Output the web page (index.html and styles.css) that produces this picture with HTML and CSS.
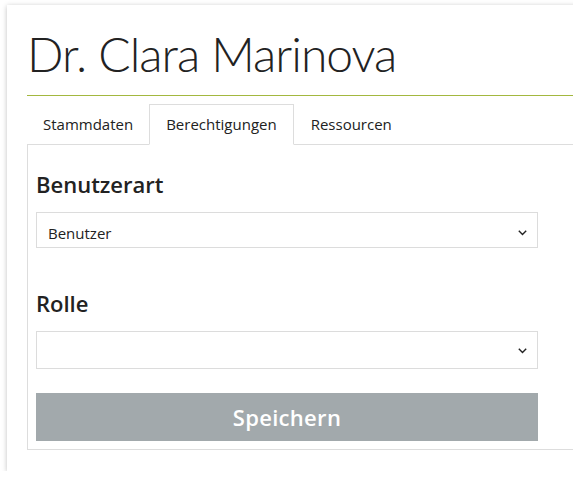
FILE: index.html
```html
<!DOCTYPE html>
<html lang="de">
<head>
<meta charset="utf-8">
<title>Dr. Clara Marinova</title>
<link rel="stylesheet" href="styles.css">
</head>
<body>
<div class="card">
  <h1 class="title">Dr. Clara Marinova</h1>
  <ul class="tabs">
    <li class="tab tab-first">Stammdaten</li>
    <li class="tab active">Berechtigungen</li>
    <li class="tab">Ressourcen</li>
  </ul>
  <div class="panel">
    <h2 class="label label-first">Benutzerart</h2>
    <div class="select select-a">
      <span class="select-value">Benutzer</span>
      <svg class="chev" width="9" height="6" viewBox="0 0 9 6"><path d="M0.8 0.8 L4.5 4.5 L8.2 0.8" fill="none" stroke="#222" stroke-width="1.4"/></svg>
    </div>
    <h2 class="label label-second">Rolle</h2>
    <div class="select select-b">
      <span class="select-value"></span>
      <svg class="chev" width="9" height="6" viewBox="0 0 9 6"><path d="M0.8 0.8 L4.5 4.5 L8.2 0.8" fill="none" stroke="#222" stroke-width="1.4"/></svg>
    </div>
    <button class="save" type="button">Speichern</button>
  </div>
</div>
</body>
</html>
```
FILE: styles.css
```css
html, body {
  margin: 0;
  padding: 0;
  background: #fff;
  overflow: hidden;
}
body {
  font-family: "Open Sans", "Noto Sans", "Liberation Sans", sans-serif;
  color: #222;
}
.card {
  margin: 5px 0 0 7px;
  width: 640px;
  padding: 19px 0 21px 20px;
  background: #fff;
  box-shadow: 0 1px 5px rgba(0, 0, 0, 0.25);
}
.title {
  margin: 0;
  padding: 0 0 11px 0;
  font-family: "Lato", "Open Sans", sans-serif;
  font-size: 48px;
  font-weight: 300;
  letter-spacing: -1px;
  line-height: 60px;
  color: #222;
  border-bottom: 1px solid #a3b83f;
}
.tabs {
  list-style: none;
  margin: 8px 0 0 0;
  padding: 0;
  display: flex;
  border-bottom: 1px solid #ddd;
}
.tab {
  box-sizing: border-box;
  height: 40px;
  padding: 0 16px;
  border: 1px solid transparent;
  font-size: 15px;
  line-height: 38px;
  color: #222;
}
.tab-first {
  padding: 0 15px;
}
.tab.active {
  height: 41px;
  margin-bottom: -1px;
  border-color: #ddd;
  border-bottom-color: #fff;
  background: #fff;
}
.panel {
  border: 1px solid #ddd;
  border-top: none;
  padding: 24px 8px 8px 8px;
}
.label {
  margin: 0;
  font-size: 22px;
  font-weight: 600;
  line-height: 30px;
  color: #222;
}
.label-second {
  margin-top: 40px;
}
.select {
  box-sizing: border-box;
  width: 502px;
  border: 1px solid #dcdcdc;
  background: #fff;
  display: flex;
  align-items: center;
  justify-content: space-between;
  padding: 0 10px 0 11px;
}
.select-a {
  height: 36px;
  margin-top: 13px;
  padding-top: 5px;
}
.select-b {
  height: 38px;
  margin-top: 13px;
  padding-top: 2px;
}
.select-value {
  font-size: 15px;
  color: #222;
}
.chev {
  display: block;
}
.save {
  display: block;
  box-sizing: border-box;
  width: 502px;
  height: 48px;
  margin-top: 24px;
  border: none;
  background: #a2a9ac;
  color: #fff;
  font-family: inherit;
  font-size: 22px;
  font-weight: 600;
  letter-spacing: 0.3px;
  padding: 0;
}
```
